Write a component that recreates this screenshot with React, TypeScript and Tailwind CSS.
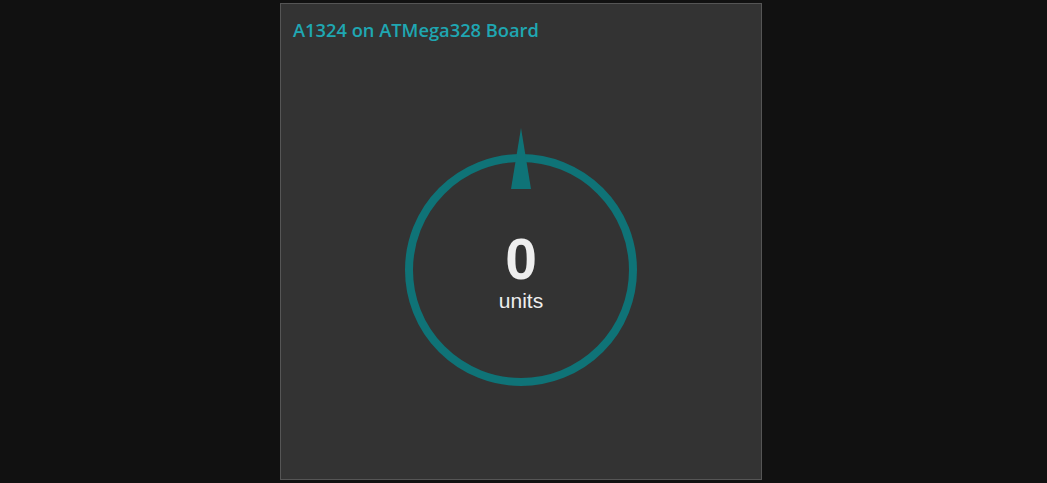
export default function App() {
  return (
    <div className="w-[1047px] h-[483px] bg-[#111111] pt-[3px] pl-[280px]">
      <div className="w-[482px] h-[477px] bg-[#333333] border border-[#555555] flex flex-col">
        <h1 className="px-3 pt-[13px] font-['Open_Sans',sans-serif] font-semibold text-[18.3px] leading-[25px] text-[#1fa7b2]">
          A1324 on ATMega328 Board
        </h1>
        <div className="flex-1 flex justify-center pt-[86px]">
          <div className="relative w-[240px] h-[260px]">
            <svg width="240" height="260" viewBox="0 0 240 260" className="absolute inset-0">
              <circle cx="120" cy="142" r="112" fill="none" stroke="#0f7377" strokeWidth="8" />
              <polygon points="120,0 110,61 130,61" fill="#0f7377" />
            </svg>
            <div className="absolute left-0 right-0 top-[107px] flex flex-col items-center text-[#eeeeee] font-['Liberation_Sans',Arial,sans-serif]">
              <span className="text-[57px] font-bold leading-[48px]">0</span>
              <span className="mt-[8px] text-[21px] leading-[20px]">units</span>
            </div>
          </div>
        </div>
      </div>
    </div>
  );
}
